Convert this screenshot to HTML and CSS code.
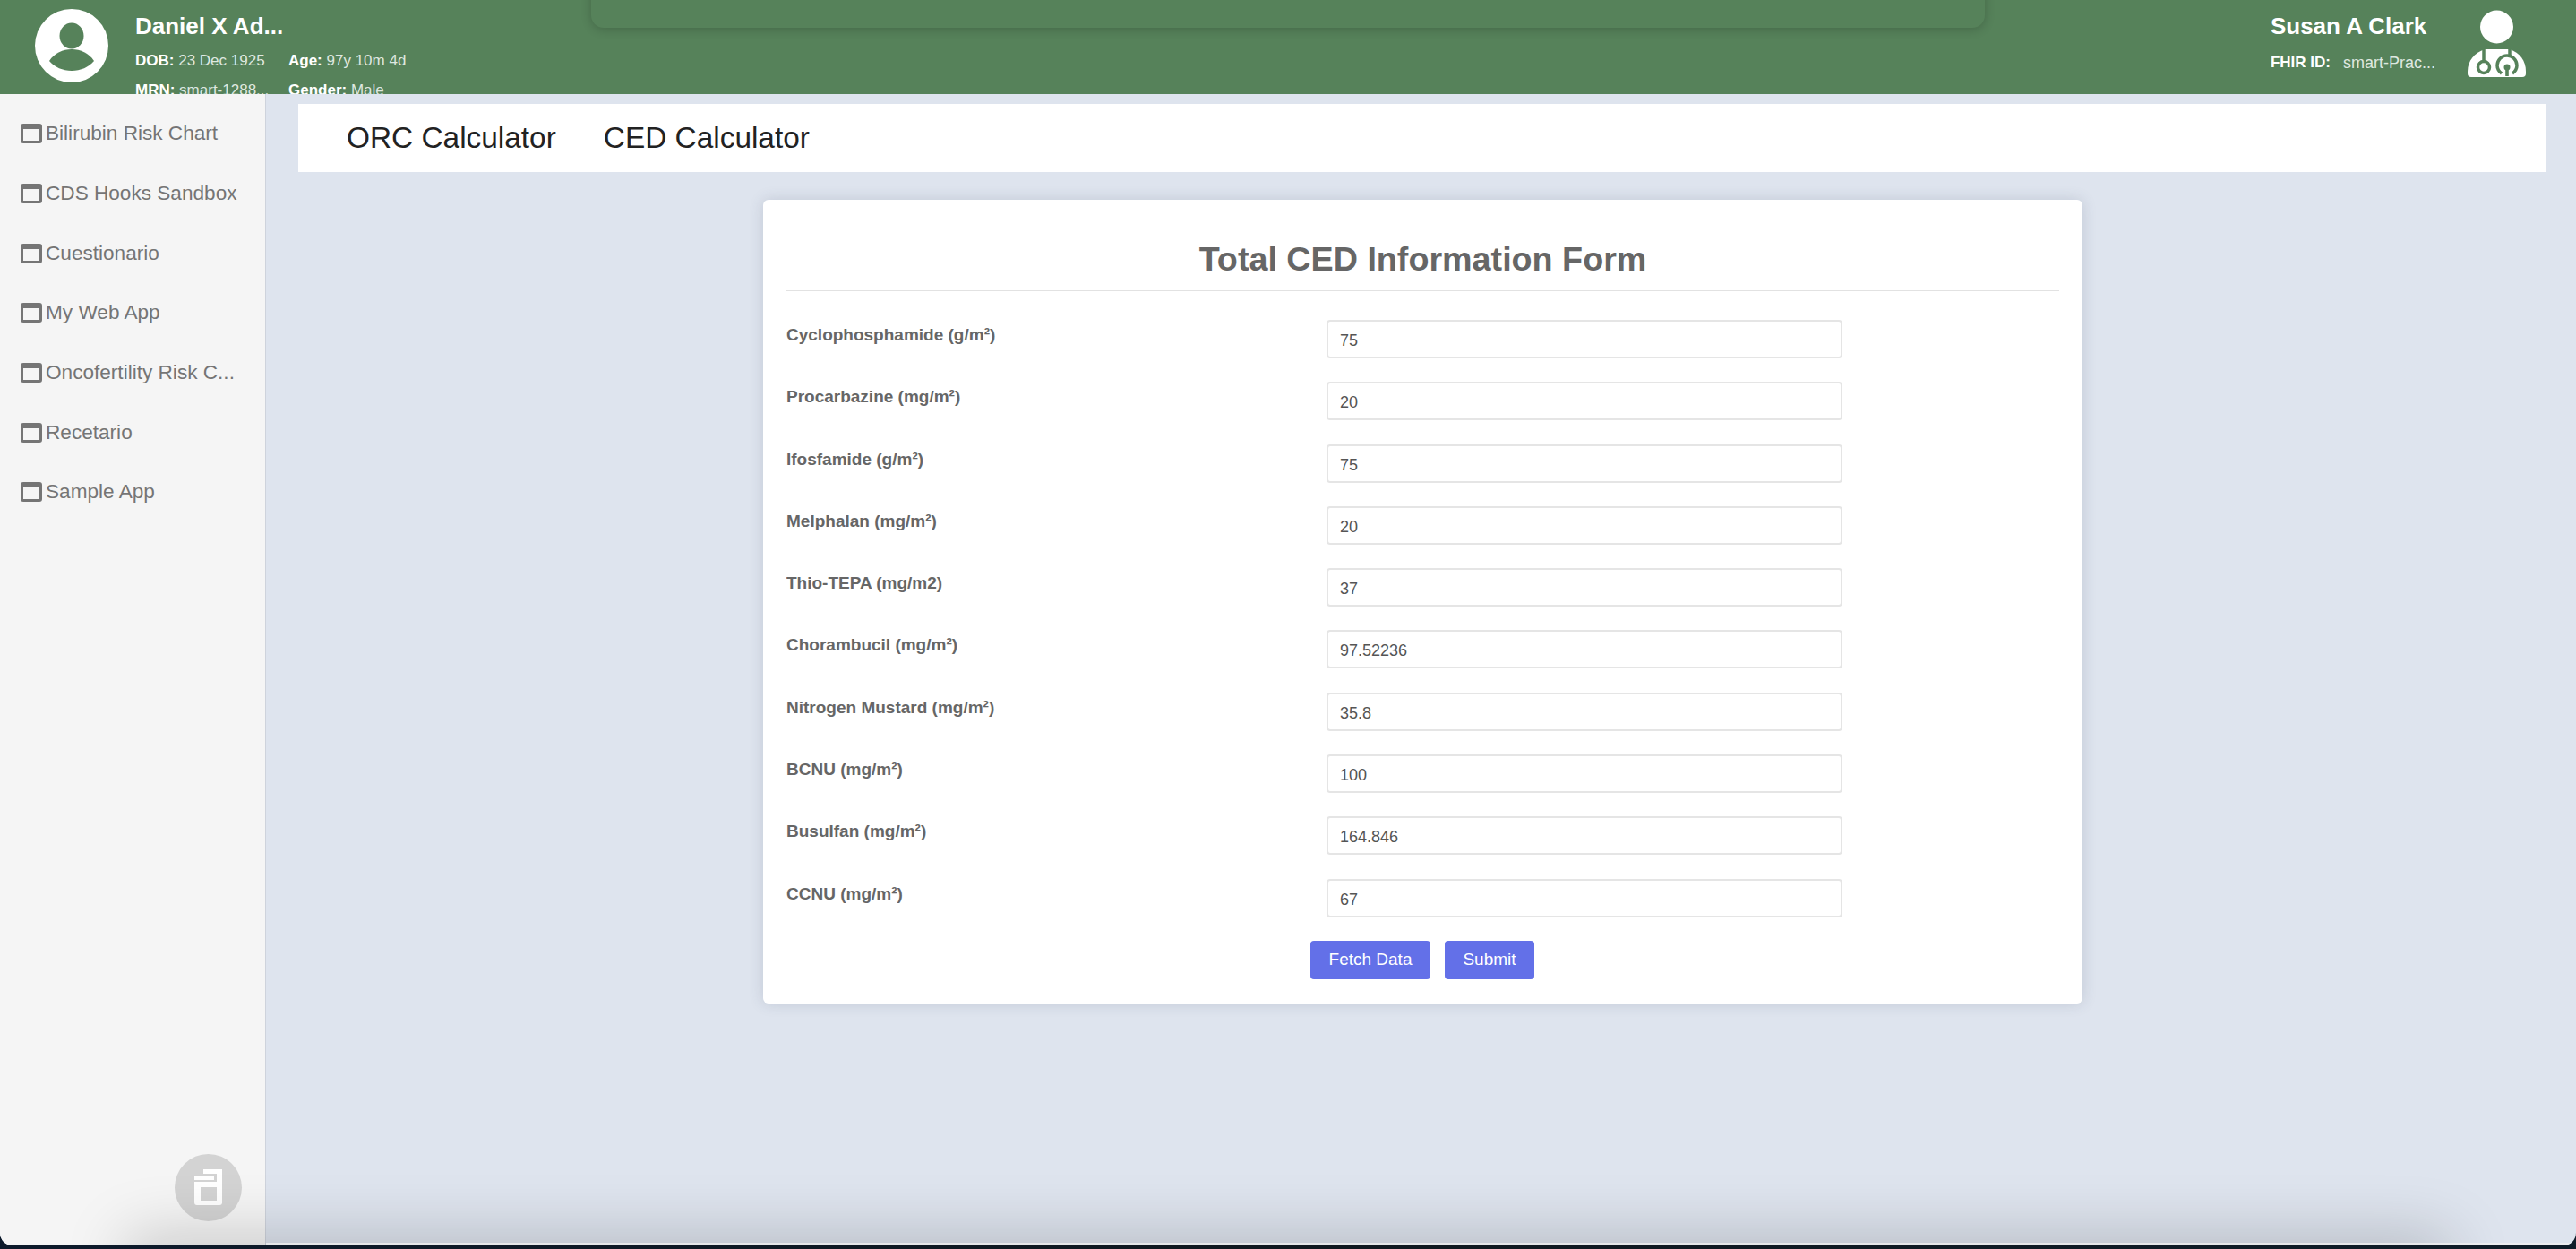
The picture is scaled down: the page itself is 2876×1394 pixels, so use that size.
FILE: index.html
```html
<!DOCTYPE html>
<html lang="en">
<head>
  <meta charset="UTF-8">
  <meta name="viewport" content="width=device-width, initial-scale=1.0">
  <title>Total CED Information Form</title>
  <link rel="stylesheet" href="styles.css">
</head>
<body>
  <svg class="defs" width="0" height="0">
    <symbol id="window" viewBox="0 0 24 22">
      <path d="M3 0h18a3 3 0 0 1 3 3v16a3 3 0 0 1-3 3H3a3 3 0 0 1-3-3V3a3 3 0 0 1 3-3zM3 6v13h18V6z" fill-rule="evenodd"/>
    </symbol>
  </svg>

  <div class="app">
    <header class="topbar">
      <div class="drawer"></div>

      <div class="patient">
        <svg class="avatar" viewBox="0 0 82 82">
          <circle cx="41" cy="41" r="41" fill="#fff"/>
          <ellipse cx="41" cy="30" rx="13.5" ry="14.5" fill="#56825a"/>
          <path d="M16 58c6-9 15-13 25-13s19 4 25 13c-6 7-15 11-25 11s-19-4-25-11z" fill="#56825a"/>
        </svg>
        <div class="patient-info">
          <div class="patient-name">Daniel X Ad...</div>
          <div class="patient-grid">
            <div><b>DOB:</b> 23 Dec 1925</div>
            <div><b>Age:</b> 97y 10m 4d</div>
            <div><b>MRN:</b> smart-1288...</div>
            <div><b>Gender:</b> Male</div>
          </div>
        </div>
      </div>

      <div class="user">
        <div class="user-info">
          <div class="user-name">Susan A Clark</div>
          <div class="user-id"><b>FHIR ID:</b><span>smart-Prac...</span></div>
        </div>
        <svg class="doctor" viewBox="0 0 100 90">
          <circle cx="47.5" cy="25" r="18.5" fill="#fff"/>
          <path d="M15 75c0-13 8-21 19-25h28c11 4 18 12 18 25v2a4 4 0 0 1-4 4H19a4 4 0 0 1-4-4z" fill="#fff"/>
          <g fill="none" stroke="#56825a" stroke-width="3.5">
            <path d="M33 49v14"/>
            <circle cx="33" cy="70" r="6.5"/>
            <path d="M62 49v8"/>
            <path d="M53 77c-4-3-5-6-5-9 0-6 5-11 11-11s11 5 11 11c0 3-1 6-5 9"/>
          </g>
          <circle cx="59" cy="70" r="3.5" fill="#56825a"/>
          <path d="M57.2 70h3.6v10h-3.6z" fill="#56825a"/>
        </svg>
      </div>
    </header>

    <div class="main">
      <nav class="sidebar">
        <a class="side-link" href="#"><svg class="side-icon"><use href="#window"/></svg>Bilirubin Risk Chart</a>
        <a class="side-link" href="#"><svg class="side-icon"><use href="#window"/></svg>CDS Hooks Sandbox</a>
        <a class="side-link" href="#"><svg class="side-icon"><use href="#window"/></svg>Cuestionario</a>
        <a class="side-link" href="#"><svg class="side-icon"><use href="#window"/></svg>My Web App</a>
        <a class="side-link" href="#"><svg class="side-icon"><use href="#window"/></svg>Oncofertility Risk C...</a>
        <a class="side-link" href="#"><svg class="side-icon"><use href="#window"/></svg>Recetario</a>
        <a class="side-link" href="#"><svg class="side-icon"><use href="#window"/></svg>Sample App</a>

        <button class="fab" type="button">
          <svg viewBox="0 0 75 75" fill="#fff">
            <path d="M32 17h21v38h-6V22H32z"/>
            <path d="M22 24h22v5H22z"/>
            <path d="M22 31h31v23a3 3 0 0 1-3 3H25a3 3 0 0 1-3-3zM29 37v15h18V37z" fill-rule="evenodd"/>
          </svg>
        </button>
      </nav>

      <main class="content">
        <div class="tabs">
          <a class="tab" href="#">ORC Calculator</a>
          <a class="tab" href="#">CED Calculator</a>
        </div>

        <form class="card">
          <h1 class="card-title">Total CED Information Form</h1>

          <div class="form-row"><label>Cyclophosphamide (g/m²)</label><input class="field" type="text" value="75"></div>
          <div class="form-row"><label>Procarbazine (mg/m²)</label><input class="field" type="text" value="20"></div>
          <div class="form-row"><label>Ifosfamide (g/m²)</label><input class="field" type="text" value="75"></div>
          <div class="form-row"><label>Melphalan (mg/m²)</label><input class="field" type="text" value="20"></div>
          <div class="form-row"><label>Thio-TEPA (mg/m2)</label><input class="field" type="text" value="37"></div>
          <div class="form-row"><label>Chorambucil (mg/m²)</label><input class="field" type="text" value="97.52236"></div>
          <div class="form-row"><label>Nitrogen Mustard (mg/m²)</label><input class="field" type="text" value="35.8"></div>
          <div class="form-row"><label>BCNU (mg/m²)</label><input class="field" type="text" value="100"></div>
          <div class="form-row"><label>Busulfan (mg/m²)</label><input class="field" type="text" value="164.846"></div>
          <div class="form-row"><label>CCNU (mg/m²)</label><input class="field" type="text" value="67"></div>

          <div class="actions">
            <button class="btn btn-fetch" type="button">Fetch Data</button>
            <button class="btn btn-submit" type="button">Submit</button>
          </div>
        </form>
      </main>
    </div>

    <div class="dock-shadow"></div>
  </div>
</body>
</html>
```

FILE: styles.css
```css
* {
  box-sizing: border-box;
}
html,
body {
  margin: 0;
  padding: 0;
  height: 100%;
  overflow: hidden;
}
body {
  background: linear-gradient(90deg, #0d1a2b, #10181f 50%, #0f1c28);
  font-family: "Liberation Sans", Arial, sans-serif;
}
.defs {
  position: absolute;
}
.app {
  position: relative;
  display: flex;
  flex-direction: column;
  height: 1390px;
  overflow: hidden;
  border-radius: 0 0 14px 14px;
  background-color: #dee4ee;
}

/* top bar */
.topbar {
  position: relative;
  display: flex;
  justify-content: space-between;
  flex: none;
  height: 105px;
  overflow: hidden;
  background-color: #56825a;
  color: #fff;
}
.drawer {
  position: absolute;
  top: -20px;
  left: 660px;
  width: 1556px;
  height: 51px;
  border-radius: 14px;
  background-color: #56825a;
  box-shadow: 0 2px 12px rgba(0, 0, 0, 0.2);
}
.patient {
  display: flex;
  padding: 10px 0 0 39px;
}
.avatar {
  width: 82px;
  height: 82px;
  flex: none;
}
.patient-info {
  margin-left: 30px;
  padding-top: 4px;
}
.patient-name {
  font-size: 26px;
  line-height: 30px;
  font-weight: 700;
}
.patient-grid {
  display: grid;
  grid-template-columns: 171px auto;
  margin-top: 7px;
  font-size: 17px;
  line-height: 33px;
  color: #dfe8e0;
}
.patient-grid b {
  color: #fff;
}
.user {
  display: flex;
  padding-right: 56px;
}
.user-info {
  margin-right: 21px;
  padding-top: 14px;
}
.user-name {
  font-size: 26px;
  line-height: 30px;
  font-weight: 700;
}
.user-id {
  display: flex;
  gap: 14px;
  margin-top: 14px;
  font-size: 17px;
  line-height: 24px;
  color: #dfe8e0;
}
.user-id b {
  color: #fff;
}
.user-id span {
  font-size: 18px;
}
.doctor {
  width: 100px;
  height: 90px;
  margin-top: 5px;
  margin-right: -20px;
}

/* sidebar */
.main {
  display: flex;
  flex: 1;
  min-height: 0;
}
.sidebar {
  position: relative;
  flex: none;
  width: 297px;
  padding-top: 11px;
  background-color: #f5f5f5;
  border-right: 1px solid #ced3dc;
}
.side-link {
  display: flex;
  align-items: center;
  height: 66.7px;
  padding-left: 23px;
  font-size: 22.6px;
  color: #757575;
  text-decoration: none;
  white-space: nowrap;
}
.side-icon {
  width: 24px;
  height: 22px;
  margin-right: 4px;
  fill: #757575;
}
.fab {
  position: absolute;
  left: 195px;
  bottom: 27px;
  width: 75px;
  height: 75px;
  padding: 0;
  border: 0;
  border-radius: 50%;
  background-color: #d3d3d3;
}
.fab svg {
  display: block;
  width: 75px;
  height: 75px;
}

/* content */
.content {
  flex: 1;
  min-width: 0;
  padding: 11px 34px 0 36px;
}
.tabs {
  display: flex;
  align-items: center;
  gap: 53px;
  height: 76px;
  padding-left: 54px;
  background-color: #fff;
}
.tab {
  font-size: 33.4px;
  color: #222;
  text-decoration: none;
}
.card {
  width: 1473px;
  height: 897px;
  margin: 31px 0 0 519px;
  padding: 0 26px;
  border-radius: 6px;
  background-color: #fff;
  box-shadow: 0 0 16px rgba(60, 70, 100, 0.18);
}
.card-title {
  height: 102px;
  margin: 0 0 29px;
  padding-top: 44px;
  border-bottom: 1.5px solid #e2e2e2;
  font-size: 37.7px;
  line-height: 44px;
  font-weight: 700;
  text-align: center;
  color: #666;
}
.form-row {
  display: flex;
  height: 69.3px;
  padding-top: 3px;
}
.form-row label {
  width: 603px;
  flex: none;
  padding-top: 5px;
  font-size: 19px;
  line-height: 24px;
  font-weight: 700;
  color: #666;
}
.field {
  width: 576px;
  height: 43px;
  padding: 4px 13px 0;
  border: 2px solid #e5e5e5;
  border-radius: 4px;
  background-color: #fff;
  font-family: inherit;
  font-size: 18px;
  color: #555;
  outline: none;
}
.actions {
  display: flex;
  gap: 16px;
  margin-top: 3px;
  padding-left: 585px;
}
.btn {
  height: 43px;
  padding: 0;
  border: 0;
  border-radius: 4px;
  background-color: #6370e8;
  font-family: inherit;
  font-size: 19px;
  color: #fff;
}
.btn-fetch {
  width: 134px;
}
.btn-submit {
  width: 100px;
}

/* shadow of the dock along the bottom edge */
.dock-shadow {
  position: absolute;
  left: 150px;
  right: 150px;
  bottom: -40px;
  height: 40px;
  box-shadow: 0 0 70px 8px rgba(0, 0, 0, 0.22);
  pointer-events: none;
}
.app::after {
  content: "";
  position: absolute;
  left: 297px;
  right: 0;
  bottom: 0;
  height: 3px;
  background-color: rgba(240, 240, 240, 0.75);
}
```
